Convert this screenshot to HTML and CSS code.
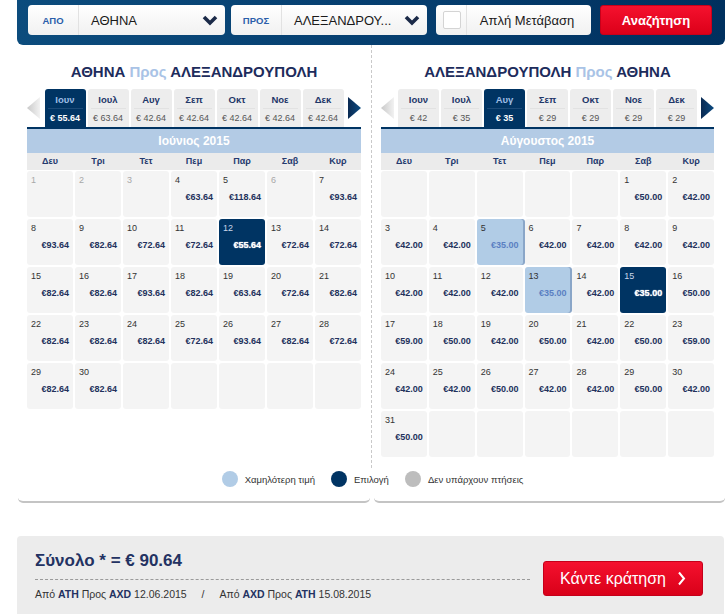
FILE: index.html
```html
<!DOCTYPE html>
<html lang="el">
<head>
    <meta charset="UTF-8">
    <meta name="viewport" content="width=device-width, initial-scale=1.0">
    <title>Ημερολόγιο Τιμών</title>
    <link rel="stylesheet" href="styles.css">
</head>
<body>
    <header class="search-bar">
        <div class="field field-from">
            <span class="field-label">ΑΠΟ</span>
            <span class="field-value">ΑΘΗΝΑ</span>
            <svg class="chevron" width="16" height="12" viewBox="0 0 16 12"><path d="M2 3 L8 9 L14 3" fill="none" stroke="#1b2a48" stroke-width="3.6" stroke-linejoin="miter"/></svg>
        </div>
        <div class="field field-to">
            <span class="field-label">ΠΡΟΣ</span>
            <span class="field-value">ΑΛΕΞΑΝΔΡΟΥ...</span>
            <svg class="chevron" width="16" height="12" viewBox="0 0 16 12"><path d="M2 3 L8 9 L14 3" fill="none" stroke="#1b2a48" stroke-width="3.6" stroke-linejoin="miter"/></svg>
        </div>
        <label class="field field-oneway">
            <span class="check-cell"><span class="checkbox"></span></span>
            <span class="field-text">Απλή Μετάβαση</span>
        </label>
        <button class="search-button">Αναζήτηση</button>
    </header>

    <main class="results">
        <div class="routes">
            <section class="route">
                <h2 class="route-title">ΑΘΗΝΑ <span>Προς</span> ΑΛΕΞΑΝΔΡΟΥΠΟΛΗ</h2>
                <div class="months">
                    <span class="month-arrow prev"><svg width="13" height="22" viewBox="0 0 13 22"><defs><linearGradient id="gl1" x1="0" y1="0" x2="1" y2="0"><stop offset="0" stop-color="#c9c9c9"/><stop offset="1" stop-color="#f2f2f2"/></linearGradient></defs><path d="M13 0 L0 11 L13 22 Z" fill="url(#gl1)"/></svg></span>
                    <ul class="month-tabs">
                        <li class="active"><b>Ιουν</b><span>€ 55.64</span></li>
                        <li><b>Ιουλ</b><span>€ 63.64</span></li>
                        <li><b>Αυγ</b><span>€ 42.64</span></li>
                        <li><b>Σεπ</b><span>€ 42.64</span></li>
                        <li><b>Οκτ</b><span>€ 42.64</span></li>
                        <li><b>Νοε</b><span>€ 42.64</span></li>
                        <li><b>Δεκ</b><span>€ 42.64</span></li>
                    </ul>
                    <span class="month-arrow next"><svg width="13" height="22" viewBox="0 0 13 22"><defs><linearGradient id="gr1" x1="0" y1="0" x2="1" y2="0"><stop offset="0" stop-color="#0a2a52"/><stop offset="1" stop-color="#0b4a80"/></linearGradient></defs><path d="M0 0 L13 11 L0 22 Z" fill="url(#gr1)"/></svg></span>
                </div>
                <div class="month-name">Ιούνιος 2015</div>
                <div class="weekdays"><span>Δευ</span><span>Τρι</span><span>Τετ</span><span>Πεμ</span><span>Παρ</span><span>Σαβ</span><span>Κυρ</span></div>
                <div class="days">
                    <div class="day off"><span class="num">1</span></div>
                    <div class="day off"><span class="num">2</span></div>
                    <div class="day off"><span class="num">3</span></div>
                    <div class="day"><span class="num">4</span><span class="price">€63.64</span></div>
                    <div class="day"><span class="num">5</span><span class="price">€118.64</span></div>
                    <div class="day off"><span class="num">6</span></div>
                    <div class="day"><span class="num">7</span><span class="price">€93.64</span></div>

                    <div class="day"><span class="num">8</span><span class="price">€93.64</span></div>
                    <div class="day"><span class="num">9</span><span class="price">€82.64</span></div>
                    <div class="day"><span class="num">10</span><span class="price">€72.64</span></div>
                    <div class="day"><span class="num">11</span><span class="price">€72.64</span></div>
                    <div class="day selected"><span class="num">12</span><span class="price">€55.64</span></div>
                    <div class="day"><span class="num">13</span><span class="price">€72.64</span></div>
                    <div class="day"><span class="num">14</span><span class="price">€72.64</span></div>

                    <div class="day"><span class="num">15</span><span class="price">€82.64</span></div>
                    <div class="day"><span class="num">16</span><span class="price">€82.64</span></div>
                    <div class="day"><span class="num">17</span><span class="price">€93.64</span></div>
                    <div class="day"><span class="num">18</span><span class="price">€82.64</span></div>
                    <div class="day"><span class="num">19</span><span class="price">€63.64</span></div>
                    <div class="day"><span class="num">20</span><span class="price">€72.64</span></div>
                    <div class="day"><span class="num">21</span><span class="price">€82.64</span></div>

                    <div class="day"><span class="num">22</span><span class="price">€82.64</span></div>
                    <div class="day"><span class="num">23</span><span class="price">€82.64</span></div>
                    <div class="day"><span class="num">24</span><span class="price">€82.64</span></div>
                    <div class="day"><span class="num">25</span><span class="price">€72.64</span></div>
                    <div class="day"><span class="num">26</span><span class="price">€93.64</span></div>
                    <div class="day"><span class="num">27</span><span class="price">€82.64</span></div>
                    <div class="day"><span class="num">28</span><span class="price">€72.64</span></div>

                    <div class="day"><span class="num">29</span><span class="price">€82.64</span></div>
                    <div class="day"><span class="num">30</span><span class="price">€82.64</span></div>
                    <div class="day"></div>
                    <div class="day"></div>
                    <div class="day"></div>
                    <div class="day"></div>
                    <div class="day"></div>
                </div>
            </section>

            <section class="route route-back">
                <h2 class="route-title">ΑΛΕΞΑΝΔΡΟΥΠΟΛΗ <span>Προς</span> ΑΘΗΝΑ</h2>
                <div class="months">
                    <span class="month-arrow prev"><svg width="13" height="22" viewBox="0 0 13 22"><defs><linearGradient id="gl2" x1="0" y1="0" x2="1" y2="0"><stop offset="0" stop-color="#c9c9c9"/><stop offset="1" stop-color="#f2f2f2"/></linearGradient></defs><path d="M13 0 L0 11 L13 22 Z" fill="url(#gl2)"/></svg></span>
                    <ul class="month-tabs">
                        <li><b>Ιουν</b><span>€ 42</span></li>
                        <li><b>Ιουλ</b><span>€ 35</span></li>
                        <li class="active"><b>Αυγ</b><span>€ 35</span></li>
                        <li><b>Σεπ</b><span>€ 29</span></li>
                        <li><b>Οκτ</b><span>€ 29</span></li>
                        <li><b>Νοε</b><span>€ 29</span></li>
                        <li><b>Δεκ</b><span>€ 29</span></li>
                    </ul>
                    <span class="month-arrow next"><svg width="13" height="22" viewBox="0 0 13 22"><defs><linearGradient id="gr2" x1="0" y1="0" x2="1" y2="0"><stop offset="0" stop-color="#0a2a52"/><stop offset="1" stop-color="#0b4a80"/></linearGradient></defs><path d="M0 0 L13 11 L0 22 Z" fill="url(#gr2)"/></svg></span>
                </div>
                <div class="month-name">Αύγουστος 2015</div>
                <div class="weekdays"><span>Δευ</span><span>Τρι</span><span>Τετ</span><span>Πεμ</span><span>Παρ</span><span>Σαβ</span><span>Κυρ</span></div>
                <div class="days">
                    <div class="day"></div>
                    <div class="day"></div>
                    <div class="day"></div>
                    <div class="day"></div>
                    <div class="day"></div>
                    <div class="day"><span class="num">1</span><span class="price">€50.00</span></div>
                    <div class="day"><span class="num">2</span><span class="price">€42.00</span></div>

                    <div class="day"><span class="num">3</span><span class="price">€42.00</span></div>
                    <div class="day"><span class="num">4</span><span class="price">€42.00</span></div>
                    <div class="day lowest"><span class="num">5</span><span class="price">€35.00</span></div>
                    <div class="day"><span class="num">6</span><span class="price">€42.00</span></div>
                    <div class="day"><span class="num">7</span><span class="price">€42.00</span></div>
                    <div class="day"><span class="num">8</span><span class="price">€42.00</span></div>
                    <div class="day"><span class="num">9</span><span class="price">€42.00</span></div>

                    <div class="day"><span class="num">10</span><span class="price">€42.00</span></div>
                    <div class="day"><span class="num">11</span><span class="price">€42.00</span></div>
                    <div class="day"><span class="num">12</span><span class="price">€42.00</span></div>
                    <div class="day lowest"><span class="num">13</span><span class="price">€35.00</span></div>
                    <div class="day"><span class="num">14</span><span class="price">€42.00</span></div>
                    <div class="day selected"><span class="num">15</span><span class="price">€35.00</span></div>
                    <div class="day"><span class="num">16</span><span class="price">€50.00</span></div>

                    <div class="day"><span class="num">17</span><span class="price">€59.00</span></div>
                    <div class="day"><span class="num">18</span><span class="price">€50.00</span></div>
                    <div class="day"><span class="num">19</span><span class="price">€42.00</span></div>
                    <div class="day"><span class="num">20</span><span class="price">€50.00</span></div>
                    <div class="day"><span class="num">21</span><span class="price">€42.00</span></div>
                    <div class="day"><span class="num">22</span><span class="price">€50.00</span></div>
                    <div class="day"><span class="num">23</span><span class="price">€59.00</span></div>

                    <div class="day"><span class="num">24</span><span class="price">€42.00</span></div>
                    <div class="day"><span class="num">25</span><span class="price">€42.00</span></div>
                    <div class="day"><span class="num">26</span><span class="price">€50.00</span></div>
                    <div class="day"><span class="num">27</span><span class="price">€42.00</span></div>
                    <div class="day"><span class="num">28</span><span class="price">€42.00</span></div>
                    <div class="day"><span class="num">29</span><span class="price">€50.00</span></div>
                    <div class="day"><span class="num">30</span><span class="price">€42.00</span></div>

                    <div class="day"><span class="num">31</span><span class="price">€50.00</span></div>
                    <div class="day"></div>
                    <div class="day"></div>
                    <div class="day"></div>
                    <div class="day"></div>
                    <div class="day"></div>
                    <div class="day"></div>
                </div>
            </section>
        </div>

        <div class="legend">
            <span class="legend-item"><i class="dot dot-lowest"></i>Χαμηλότερη τιμή</span>
            <span class="legend-item"><i class="dot dot-selected"></i>Επιλογή</span>
            <span class="legend-item"><i class="dot dot-none"></i>Δεν υπάρχουν πτήσεις</span>
        </div>
        <div class="card-ends"><span></span><span></span></div>
    </main>

    <footer class="summary">
        <div class="total">
            <h3>Σύνολο * = € 90.64</h3>
            <p>Από <b>ΑΤΗ</b> Προς <b>AXD</b> 12.06.2015 <span class="sep">/</span> Από <b>AXD</b> Προς <b>ΑΤΗ</b> 15.08.2015</p>
        </div>
        <button class="book-button">Κάντε κράτηση <svg width="9" height="15" viewBox="0 0 9 15"><path d="M2 1.5 L7 7.5 L2 13.5" fill="none" stroke="#fff" stroke-width="2"/></svg></button>
    </footer>
</body>
</html>
```

FILE: styles.css
```css
body {
    font-family: "Liberation Sans", Arial, sans-serif;
    background-color: #fff;
    margin: 0;
    padding: 0;
    width: 728px;
    color: #222;
}

/* barra de busqueda */
.search-bar {
    margin-left: 17px;
    width: 708px;
    height: 45px;
    box-sizing: border-box;
    padding: 5px 13px 0 11px;
    display: flex;
    gap: 6px;
    background: linear-gradient(to right, #0c4c7d 0%, #063f70 50%, #00305e 100%);
    border-radius: 0 0 6px 6px;
}

.field {
    height: 30px;
    display: flex;
    align-items: center;
    background: linear-gradient(#ffffff, #f1f1f1);
    border-radius: 4px;
    font-size: 13px;
    box-sizing: border-box;
}

.field-from { width: 197px; }
.field-to { width: 196px; }

.field-label {
    width: 51px;
    height: 100%;
    display: flex;
    align-items: center;
    justify-content: center;
    border-right: 1px solid #e2e2e2;
    font-size: 9.5px;
    font-weight: bold;
    color: #2a5eaa;
    box-sizing: border-box;
}

.field-value {
    flex: 1;
    padding-left: 12px;
    white-space: nowrap;
    overflow: hidden;
    color: #1a1a1a;
}

.chevron {
    margin-right: 7px;
}

.field-oneway {
    width: 155px;
    margin-left: 3px;
}

.check-cell {
    width: 31px;
    height: 100%;
    display: flex;
    align-items: center;
    padding-left: 7px;
    border-right: 1px solid #e2e2e2;
    box-sizing: border-box;
}

.checkbox {
    width: 18px;
    height: 18px;
    background-color: #fff;
    border: 1px solid #d4d4d4;
    border-radius: 2px;
    box-sizing: border-box;
}

.field-text {
    flex: 1;
    text-align: center;
    color: #1a1a1a;
    padding-right: 4px;
}

.search-button {
    width: 112px;
    height: 30px;
    margin-left: 3px;
    border: 1px solid #c9001a;
    border-radius: 3px;
    background: linear-gradient(#f5112e, #dc0019);
    color: #fff;
    font-family: inherit;
    font-size: 13px;
    font-weight: bold;
    padding: 0;
}

/* calendarios */
.results {
    margin-left: 17px;
    width: 709px;
}

.routes {
    display: flex;
}

.route {
    width: 354px;
    box-sizing: border-box;
    padding: 15px 10px 11px;
}

.route-back {
    width: 355px;
    padding: 15px 12px 11px 9px;
    border-left: 1px dashed #c9c9c9;
}

.route-title {
    margin: 0;
    height: 24px;
    line-height: 24px;
    text-align: center;
    font-size: 15px;
    font-weight: bold;
    color: #1d2c5c;
}

.route-title span {
    color: #a9c3e6;
}

.months {
    margin-top: 5px;
    display: flex;
    align-items: center;
    justify-content: space-between;
    border-bottom: 2px solid #003463;
}

.month-arrow {
    width: 13px;
    height: 22px;
    display: block;
}

.month-arrow svg {
    display: block;
}

.month-tabs {
    list-style: none;
    margin: 0;
    padding: 0;
    display: flex;
    gap: 2px;
    align-self: flex-end;
}

.month-tabs li {
    width: 41px;
    height: 38px;
    background-color: #ededed;
    border-radius: 3px 3px 0 0;
    display: flex;
    flex-direction: column;
    align-items: center;
    font-size: 9px;
}

.month-tabs li b {
    width: 35px;
    height: 19px;
    line-height: 21px;
    text-align: center;
    color: #1f3769;
    border-bottom: 1px solid #e2e2e2;
    font-size: 9.5px;
}

.month-tabs li span {
    line-height: 18px;
    color: #555;
}

.month-tabs li.active {
    background-color: #003463;
}

.month-tabs li.active b {
    color: #9dbde6;
    border-bottom-color: #1b4a78;
}

.month-tabs li.active span {
    color: #fff;
    font-weight: bold;
}

.month-name {
    height: 24px;
    line-height: 24px;
    background-color: #b3cbe5;
    color: #fff;
    text-align: center;
    font-size: 12px;
    font-weight: bold;
}

.weekdays,
.days {
    display: grid;
    grid-template-columns: repeat(7, 1fr);
    column-gap: 2px;
}

.weekdays {
    height: 17px;
    line-height: 17px;
    background-color: #ebebeb;
    margin-bottom: 1px;
    font-size: 9px;
    font-weight: bold;
    color: #253a6e;
    text-align: center;
}

.days {
    row-gap: 2px;
}

.day {
    height: 46px;
    box-sizing: border-box;
    padding: 4px 4px 0;
    background-color: #f4f4f4;
    border-radius: 3px;
    display: flex;
    flex-direction: column;
    font-size: 9px;
}

.num {
    line-height: 11px;
    color: #333;
}

.price {
    margin-top: 6px;
    line-height: 11px;
    text-align: right;
    font-weight: bold;
    color: #22315c;
}

.day.off .num {
    color: #a8a8a8;
}

.day.selected {
    background-color: #003463;
}

.day.selected .num {
    color: #c9d6ea;
}

.day.selected .price {
    color: #fff;
    text-shadow: 0 0 1px #fff;
}

.day.lowest {
    background-color: #b1cce6;
    box-shadow: 2px 0 0 #8aa6c8;
}

.day.lowest .price {
    color: #5a7fc2;
}

/* leyenda */
.legend {
    height: 22px;
    display: flex;
    justify-content: center;
    align-items: center;
    gap: 16px;
    font-size: 9.5px;
    color: #333;
    padding-left: 2px;
}

.legend-item {
    display: flex;
    align-items: center;
    gap: 7px;
}

.dot {
    width: 16px;
    height: 16px;
    border-radius: 50%;
    display: block;
}

.dot-lowest { background-color: #b1cce6; }
.dot-selected { background-color: #003463; }
.dot-none { background-color: #bdbdbd; }

.card-ends {
    display: flex;
    gap: 2px;
}

.card-ends span {
    height: 11px;
    background-color: #fff;
    border-radius: 0 0 6px 6px;
    box-shadow: 0 3px 0 -1px #c4c4c4;
}

.card-ends span:first-child { width: 354px; }
.card-ends span:last-child { width: 353px; }

/* resumen */
.summary {
    margin: 35px 0 0 17px;
    width: 707px;
    height: 78px;
    box-sizing: border-box;
    padding: 15px 21px 0 18px;
    background-color: #ececec;
    border-radius: 4px 4px 0 0;
    display: flex;
    justify-content: space-between;
    align-items: flex-start;
}

.total {
    width: 495px;
}

.total h3 {
    margin: 0;
    font-size: 17px;
    line-height: 20px;
    padding-bottom: 8px;
    color: #233262;
    border-bottom: 1px dashed #9a9a9a;
}

.total p {
    margin: 7px 0 0;
    font-size: 10.5px;
    line-height: 14px;
    color: #333;
}

.total p b {
    color: #233262;
}

.total .sep {
    margin: 0 12px;
}

.book-button {
    margin-top: 10px;
    width: 160px;
    height: 35px;
    border: 1px solid #c5001a;
    border-radius: 3px;
    background: linear-gradient(#f5112e, #d90019);
    color: #fff;
    font-family: inherit;
    font-size: 16px;
    display: flex;
    align-items: center;
    justify-content: center;
    gap: 11px;
    padding: 0;
}
```
